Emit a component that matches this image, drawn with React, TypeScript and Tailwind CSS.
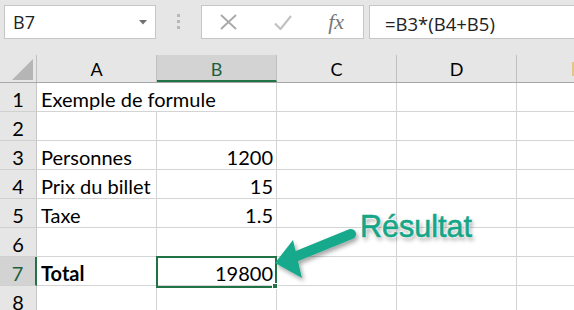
import React from "react";

type Row = {
  n: number;
  a?: string;
  b?: string;
  bold?: boolean;
  overflow?: boolean;
};

const rows: Row[] = [
  { n: 1, a: "Exemple de formule", overflow: true },
  { n: 2 },
  { n: 3, a: "Personnes", b: "1200" },
  { n: 4, a: "Prix du billet", b: "15" },
  { n: 5, a: "Taxe", b: "1.5" },
  { n: 6 },
  { n: 7, a: "Total", b: "19800", bold: true },
  { n: 8 },
];

const cellFont = "font-['Lato',sans-serif] text-[20px] text-black";

function Toolbar() {
  return (
    <div className="flex h-[55px] items-start pl-[4px] pt-[5px]">
      <div className="relative flex h-[34px] w-[152px] shrink-0 items-center border border-[#c6c6c6] bg-white pl-[8px] font-['Open_Sans',sans-serif] text-[18px] text-[#222]">
        B7
        <svg className="absolute left-[134px] top-[14px]" width="8" height="5" viewBox="0 0 8 5">
          <path d="M0 0h8L4 4.5z" fill="#707070" />
        </svg>
      </div>
      <div className="flex h-[34px] w-[45px] shrink-0 flex-col items-center gap-[3px] pt-[9px]">
        <span className="h-[3px] w-[3px] bg-[#b8b8b8]" />
        <span className="h-[3px] w-[3px] bg-[#b8b8b8]" />
        <span className="h-[3px] w-[3px] bg-[#b8b8b8]" />
      </div>
      <div className="flex h-[34px] w-[163px] shrink-0 items-center border border-[#c6c6c6] bg-white">
        <span className="flex w-[54px] justify-center">
          <svg width="17" height="16" viewBox="0 0 17 16">
            <path d="M1 1L16 15M16 1L1 15" stroke="#a8a8a8" strokeWidth="1.8" fill="none" />
          </svg>
        </span>
        <span className="flex w-[54px] justify-center">
          <svg width="18" height="15" viewBox="0 0 18 15">
            <path d="M1 8.5L6.5 14L17 1" stroke="#c2c2c2" strokeWidth="2.2" fill="none" />
          </svg>
        </span>
        <span className="flex w-[54px] justify-center font-['Liberation_Serif',serif] text-[22px] italic leading-none text-[#777]">
          fx
        </span>
      </div>
      <div className="ml-[5px] flex h-[34px] w-[215px] shrink-0 items-center border border-[#c6c6c6] bg-white pl-[15px] pt-[3px] font-['Open_Sans',sans-serif] text-[18.5px] text-[#222]">
        =B3*(B4+B5)
      </div>
    </div>
  );
}

function HeaderRow() {
  const cols = ["C", "D"];
  return (
    <div className="flex h-[28px] border-b border-[#a8a8a8] font-['Lato',sans-serif] text-[18px]">
      <div className="relative w-[37px] shrink-0 border-r border-[#c0c0c0]">
        <svg className="absolute left-[12px] top-[4px]" width="22" height="21" viewBox="0 0 22 21">
          <path d="M21 0V21H0z" fill="#b5b5b5" />
        </svg>
      </div>
      <div className="w-[120px] shrink-0 border-r border-[#c0c0c0] pt-[2px] text-center leading-[25px] text-black">A</div>
      <div className="w-[120px] shrink-0 border-b-2 border-r border-b-[#217346] border-r-[#c0c0c0] bg-[#d3d3d3] pt-[2px] text-center leading-[24px] text-[#1f5f3c]">
        B
      </div>
      {cols.map((c) => (
        <div key={c} className="w-[120px] shrink-0 border-r border-[#c0c0c0] pt-[2px] text-center leading-[25px] text-black">
          {c}
        </div>
      ))}
      <div className="flex flex-1 items-center justify-end">
        <span className="h-[14px] w-[2px] bg-[#e7c488]" />
      </div>
    </div>
  );
}

function GridRow({ r }: { r: Row }) {
  const sel = r.n === 7;
  return (
    <div className={`flex h-[29px] ${cellFont}`}>
      <div
        className={`w-[37px] shrink-0 border-b border-[#d0d0d0] pt-[4px] text-center leading-[24px] ${
          sel ? "border-r-2 border-r-[#217346] bg-[#d3d3d3] text-[#1f5f3c]" : "border-r border-r-[#c6c6c6] bg-[#e6e6e6]"
        }`}
      >
        {r.n}
      </div>
      <div
        className={`w-[120px] shrink-0 whitespace-nowrap border-b border-[#d4d4d4] bg-white pl-[4px] pt-[4px] leading-[24px] ${
          r.overflow ? "relative z-[1]" : "border-r"
        } ${r.bold ? "font-bold" : ""} ${sel ? "w-[119px]" : ""}`}
      >
        {r.a}
      </div>
      <div className="w-[120px] shrink-0 border-b border-r border-[#d4d4d4] bg-white pr-[3px] pt-[4px] text-right leading-[24px]">
        {r.b}
      </div>
      <div className="w-[120px] shrink-0 border-b border-r border-[#d4d4d4] bg-white" />
      <div className="w-[120px] shrink-0 border-b border-r border-[#d4d4d4] bg-white" />
      <div className="flex-1 border-b border-[#d4d4d4] bg-white" />
    </div>
  );
}

function Callout() {
  return (
    <>
      <svg className="pointer-events-none absolute left-0 top-0 z-[2]" width="574" height="310" viewBox="0 0 574 310">
        <defs>
          <filter id="sh" x="-20%" y="-20%" width="150%" height="160%">
            <feDropShadow dx="2" dy="3" stdDeviation="2.2" floodColor="#000" floodOpacity="0.35" />
          </filter>
        </defs>
        <g filter="url(#sh)" fill="#17a98b">
          <path d="M351 234L297 256" stroke="#17a98b" strokeWidth="10" strokeLinecap="round" />
          <path d="M275 263L293 240L302 278z" />
        </g>
      </svg>
      <div className="absolute left-[360px] top-[211px] z-[2] font-['Liberation_Sans',sans-serif] text-[30.5px] leading-none text-[#15a687] [-webkit-text-stroke:0.6px_#15a687] [text-shadow:0_0_2px_#fff,0_0_2px_#fff,0_0_3px_#fff,2px_3px_4px_rgba(0,0,0,0.4)]">
        Résultat
      </div>
    </>
  );
}

export default function App() {
  return (
    <div className="relative h-[310px] w-[574px] overflow-hidden bg-[#e6e6e6]">
      <Toolbar />
      <HeaderRow />
      {rows.map((r) => (
        <GridRow key={r.n} r={r} />
      ))}
      <div className="pointer-events-none absolute left-[156px] top-[256px] z-[2] h-[32px] w-[121px] border-2 border-[#217346]" />
      <div className="pointer-events-none absolute left-[272px] top-[283px] z-[2] h-[6px] w-[6px] border border-white bg-[#217346]" />
      <Callout />
    </div>
  );
}
